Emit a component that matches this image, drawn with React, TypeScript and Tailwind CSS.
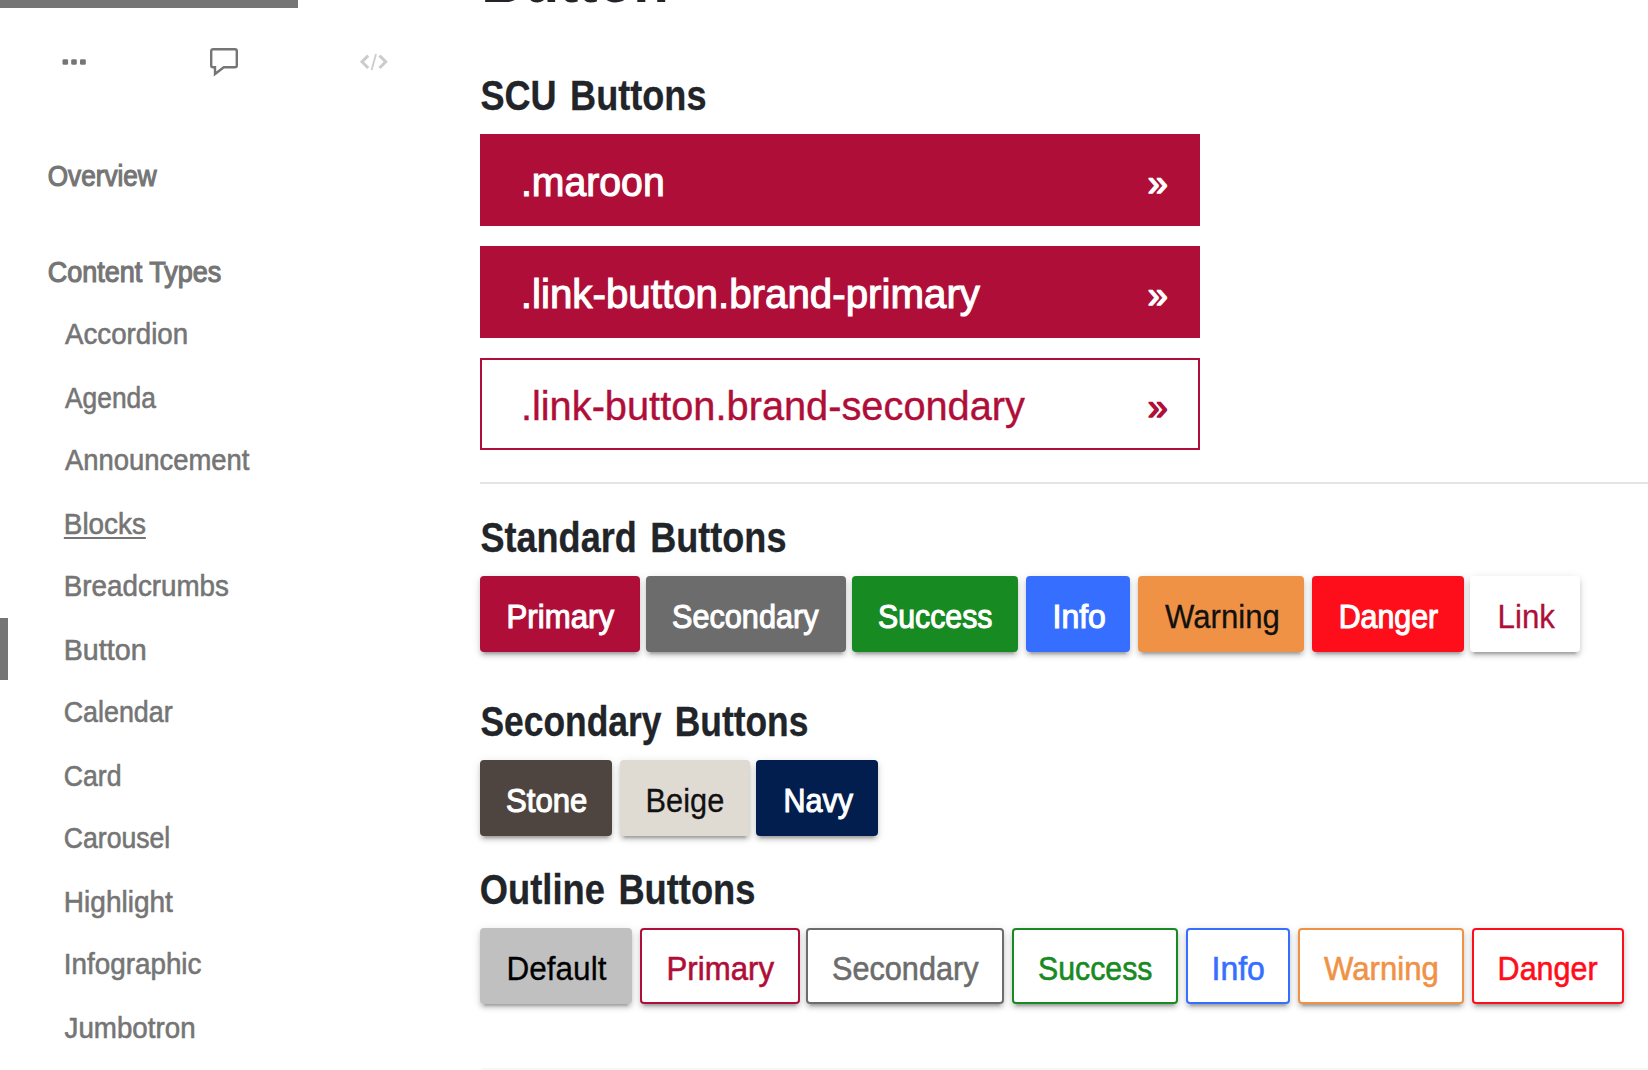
import { useLayoutEffect, useRef } from "react";
import clsx from "clsx";

/** One line of text whose drawn glyphs fill exactly `width` pixels. */
function Fit({ text, width, className }: { text: string; width: number; className?: string }) {
  const ref = useRef<HTMLSpanElement>(null);
  useLayoutEffect(() => {
    const el = ref.current;
    const ctx = document.createElement("canvas").getContext("2d");
    if (!el || !ctx) return;
    const cs = getComputedStyle(el);
    // Measured at ten times the size, since glyph bounds are rounded to whole pixels.
    const k = 10;
    ctx.font = `${cs.fontWeight} ${parseFloat(cs.fontSize) * k}px ${cs.fontFamily}`;
    ctx.wordSpacing = `${(parseFloat(cs.wordSpacing) || 0) * k}px`;
    const m = ctx.measureText(text);
    const left = m.actualBoundingBoxLeft / k;
    const scale = width / (left + m.actualBoundingBoxRight / k);
    el.style.transform = `translateX(${left * scale}px) scaleX(${scale})`;
  }, [text, width]);
  return (
    <span className="block shrink-0" style={{ width }}>
      <span ref={ref} className={clsx("inline-block origin-left whitespace-nowrap", className)}>
        {text}
      </span>
    </span>
  );
}

const nav = [
  { label: "Accordion", w: 121.5, h: "h-[64px]", pl: "pl-[56.6px]" },
  { label: "Agenda", w: 91, h: "h-[62px]", pl: "pl-[56.6px]" },
  { label: "Announcement", w: 184.5, h: "h-[64px]", pl: "pl-[56.6px]" },
  { label: "Blocks", w: 79, h: "h-[62px]", pl: "pl-[57.5px]", underline: true },
  { label: "Breadcrumbs", w: 162, h: "h-[64px]", pl: "pl-[57.5px]" },
  { label: "Button", w: 79, h: "h-[62px]", pl: "pl-[57.5px]", active: true },
  { label: "Calendar", w: 107.5, h: "h-[64px]", pl: "pl-[57px]" },
  { label: "Card", w: 55, h: "h-[62px]", pl: "pl-[57px]" },
  { label: "Carousel", w: 103.5, h: "h-[64px]", pl: "pl-[57px]" },
  { label: "Highlight", w: 107, h: "h-[62px]", pl: "pl-[57.5px]" },
  { label: "Infographic", w: 135, h: "h-[64px]", pl: "pl-[57.5px]" },
  { label: "Jumbotron", w: 129, h: "h-[62px]", pl: "pl-[56.5px]" },
];

function Sidebar() {
  return (
    <aside className="w-[480px] shrink-0 text-[30px] leading-[63px] text-[#757575]">
      <div className="h-2 w-[298px] bg-[#757575]" />
      <div className="flex h-[108px] items-start pt-[38px] pl-[60px]">
        <svg width="28" height="32" viewBox="0 0 28 32" fill="currentColor">
          <rect x="2.5" y="13.2" width="5.6" height="5.6" rx="1.4" />
          <rect x="11.2" y="13.2" width="5.6" height="5.6" rx="1.4" />
          <rect x="20" y="13.2" width="5.8" height="5.6" rx="1.4" />
        </svg>
        <svg className="ml-[120px]" width="32" height="32" viewBox="0 0 32 32" fill="none" stroke="currentColor" strokeWidth="2.4">
          <path d="M5 21.2H7V28L15.8 21.2H26.8C28.2 21.2 28.8 20.5 28.8 19.5V5.2C28.8 3.9 28.1 3.2 27 3.2H5C3.8 3.2 3.2 3.9 3.2 5.2V19.4C3.2 20.5 3.8 21.2 5 21.2Z" />
        </svg>
        <svg className="ml-[118px]" width="32" height="32" viewBox="0 0 32 32" fill="none" stroke="#cccccc">
          <path d="M10.2 9.6L4 15.8L10.2 22M21.5 9.6L27.7 15.8L21.5 22" strokeWidth="3" />
          <path d="M18 8L13.6 24" strokeWidth="1.8" />
        </svg>
      </div>
      <div className="flex h-24 pt-[28px] pl-[49px]">
        <Fit text="Overview" width={108} className="[-webkit-text-stroke:1.2px]" />
      </div>
      <div className="flex h-[90px] pt-[28px] pl-[49px]">
        <Fit text="Content Types" width={172} className="[-webkit-text-stroke:1.2px]" />
      </div>
      <nav>
        {nav.map((n) => (
          <div key={n.label} className={clsx("flex", n.h)}>
            <div className={clsx("w-2 shrink-0", n.active && "bg-[#757575]")} />
            <div className={n.pl}>
              <Fit
                text={n.label}
                width={n.w}
                className={clsx(
                  "[-webkit-text-stroke:0.6px]",
                  n.underline && "underline decoration-2 underline-offset-[3px] [text-decoration-skip-ink:none]",
                )}
              />
            </div>
          </div>
        ))}
      </nav>
    </aside>
  );
}

function Heading({ text, width, className }: { text: string; width: number; className: string }) {
  return (
    <h3
      className={clsx(
        "flex pl-[1px] text-[42px] leading-[48px] font-bold text-[#212529] [-webkit-text-stroke:0.3px]",
        className,
      )}
    >
      <Fit text={text} width={width} className="[word-spacing:4px]" />
    </h3>
  );
}

function LinkButton({ text, width, outline }: { text: string; width: number; outline?: boolean }) {
  return (
    <a
      className={clsx(
        "flex h-[92px] w-[720px] justify-between border-2 border-[#af0e39] pr-[32px] pl-[42px] text-[41.5px] leading-[92px]",
        outline
          ? "bg-white text-[#af0e39] [-webkit-text-stroke:0.4px]"
          : "bg-[#af0e39] text-white [-webkit-text-stroke:1.1px]",
      )}
    >
      <Fit text={text} width={width} />
      <Fit text="»" width={17.5} className="text-[36px] leading-[90px] [-webkit-text-stroke:1.4px]" />
    </a>
  );
}

type Btn = { t: string; w: string; pl: string; ink: number; c: string };

const white = "text-white [-webkit-text-stroke:1.1px]";

const standard: Btn[] = [
  { t: "Primary", w: "w-[160px]", pl: "pl-[26.5px]", ink: 105, c: `bg-[#af0e39] border-[#af0e39] mr-[6px] ${white}` },
  { t: "Secondary", w: "w-[200px]", pl: "pl-[25.3px]", ink: 145.5, c: `bg-[#6c6c6c] border-[#6c6c6c] mr-[6px] ${white}` },
  { t: "Success", w: "w-[166px]", pl: "pl-[25.3px]", ink: 112.5, c: `bg-[#178a22] border-[#178a22] mr-[8px] ${white}` },
  { t: "Info", w: "w-[104px]", pl: "pl-[26.5px]", ink: 49.5, c: `bg-[#366fff] border-[#366fff] mr-[8px] ${white}` },
  { t: "Warning", w: "w-[166px]", pl: "pl-[24.5px]", ink: 113, c: "bg-[#f09246] border-[#f09246] mr-[8px] text-[#111111] [-webkit-text-stroke:0.3px]" },
  { t: "Danger", w: "w-[152px]", pl: "pl-[26.5px]", ink: 97, c: `bg-[#fe0d1b] border-[#fe0d1b] mr-[6px] ${white}` },
  { t: "Link", w: "w-[110px]", pl: "pl-[27.5px]", ink: 55.5, c: "bg-white border-white text-[#af0e39] [-webkit-text-stroke:0.3px]" },
];

const secondary: Btn[] = [
  { t: "Stone", w: "w-[132px]", pl: "pl-[24.5px]", ink: 79, c: `bg-[#4e4540] border-[#4e4540] mr-[8px] ${white}` },
  { t: "Beige", w: "w-[130px]", pl: "pl-[26.3px]", ink: 75, c: "bg-[#dfdad2] border-[#dfdad2] mr-[6px] text-[#111111] [-webkit-text-stroke:0.3px]" },
  { t: "Navy", w: "w-[122px]", pl: "pl-[27.5px]", ink: 67, c: `bg-[#021e4f] border-[#021e4f] ${white}` },
];

const thin = "[-webkit-text-stroke:0.6px]";

const outline: Btn[] = [
  { t: "Default", w: "w-[152px]", pl: "pl-[26.5px]", ink: 97.5, c: "bg-[#c0c0c0] border-[#c0c0c0] mr-[8px] text-black [-webkit-text-stroke:0.3px]" },
  { t: "Primary", w: "w-[160px]", pl: "pl-[26.5px]", ink: 105, c: `bg-white border-[#af0e39] mr-[6px] text-[#af0e39] ${thin}` },
  { t: "Secondary", w: "w-[198px]", pl: "pl-[25.3px]", ink: 145.5, c: `bg-white border-[#6c6c6c] mr-[8px] text-[#6c6c6c] ${thin}` },
  { t: "Success", w: "w-[166px]", pl: "pl-[25.3px]", ink: 112.5, c: `bg-white border-[#178a22] mr-[8px] text-[#178a22] ${thin}` },
  { t: "Info", w: "w-[104px]", pl: "pl-[26.3px]", ink: 49.5, c: `bg-white border-[#366fff] mr-[8px] text-[#366fff] ${thin}` },
  { t: "Warning", w: "w-[166px]", pl: "pl-[24px]", ink: 113, c: `bg-white border-[#f09246] mr-[8px] text-[#f09246] ${thin}` },
  { t: "Danger", w: "w-[152px]", pl: "pl-[25.5px]", ink: 97.5, c: `bg-white border-[#fe0d1b] text-[#fe0d1b] ${thin}` },
];

function ButtonRow({ items }: { items: Btn[] }) {
  return (
    <div className="flex">
      {items.map((b) => (
        <button
          key={b.t}
          className={clsx(
            "flex h-[76px] shrink-0 items-start rounded-[4px] border-2 text-left text-[33.5px] leading-[77px] shadow-[0_6px_2px_-4px_rgba(0,0,0,0.2),0_4px_4px_rgba(0,0,0,0.14),0_2px_10px_rgba(0,0,0,0.12)]",
            b.w,
            b.pl,
            b.c,
          )}
        >
          <Fit text={b.t} width={b.ink} />
        </button>
      ))}
    </div>
  );
}

export default function App() {
  return (
    <div className="flex h-[1070px] w-[1648px] overflow-hidden bg-white font-['Liberation_Sans',Arial,sans-serif]">
      <Sidebar />
      <main className="min-w-0 flex-1">
        <h1 className="-mt-[52px] flex h-[64px] pl-[5px] text-[64px] leading-[64px] font-bold text-[#212529]">
          <Fit text="Button" width={181} />
        </h1>
        <Heading text="SCU Buttons" width={224} className="mt-[60px] h-[62px]" />
        <div className="flex flex-col gap-5">
          <LinkButton text=".maroon" width={138.5} />
          <LinkButton text=".link-button.brand-primary" width={456} />
          <LinkButton text=".link-button.brand-secondary" width={501} outline />
        </div>
        <hr className="mt-8 border-t-2 border-[#e4e4e4]" />
        <Heading text="Standard Buttons" width={304} className="mt-[30px] h-[62px]" />
        <ButtonRow items={standard} />
        <Heading text="Secondary Buttons" width={326} className="mt-[46px] h-[62px]" />
        <ButtonRow items={secondary} />
        <Heading text="Outline Buttons" width={273} className="mt-[30px] h-[62px]" />
        <ButtonRow items={outline} />
        <div className="mt-[64px] h-2 rounded-tl-[4px] border-t-2 border-l-2 border-[#f6f6f6]" />
      </main>
    </div>
  );
}
